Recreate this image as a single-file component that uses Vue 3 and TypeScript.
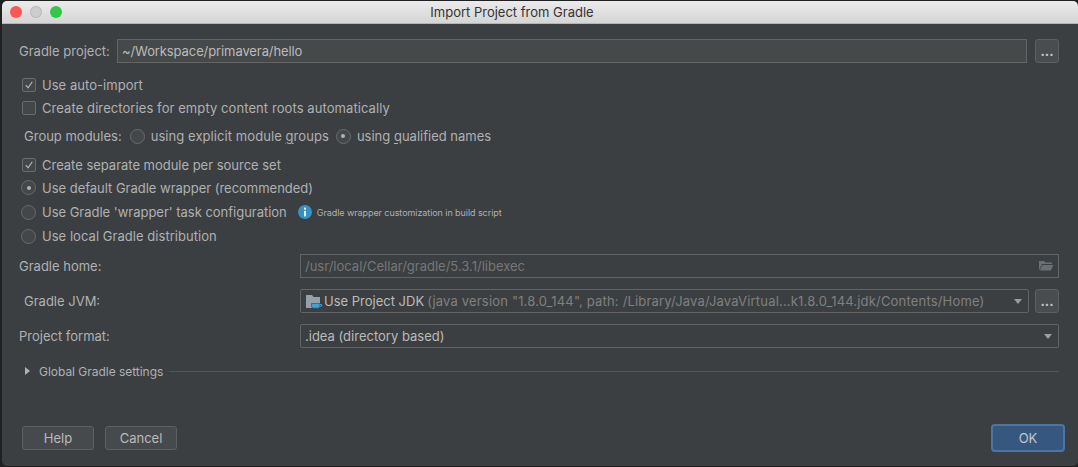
<script setup lang="ts">
const ellipsis = '...'
</script>

<template>
  <div class="screen">
    <div class="window">
      <header class="titlebar">
        <div class="lights">
          <span class="light red"></span>
          <span class="light gray"></span>
          <span class="light green"></span>
        </div>
        <div class="title">Import Project from Gradle</div>
      </header>
      <main class="content">
        <div class="project-row">
          <span class="label">Gradle project:</span>
          <div class="field project-field">~/Workspace/primavera/hello</div>
          <button class="dots">{{ ellipsis }}</button>
        </div>
        <div class="opt first"><span class="check on"><svg viewBox="0 0 14 14" width="14" height="14"><path d="M3.2 7.2 6 10.2 10.8 3.2" fill="none" stroke="#aeb0b2" stroke-width="1.5"/></svg></span>Use auto-import</div>
        <div class="opt wide"><span class="check"></span>Create directories for empty content roots automatically</div>
        <div class="group-row">
          <span class="group-label">Group modules:</span>
          <span class="radio"></span><span class="group-text">using explicit module <u>g</u>roups</span>
          <span class="radio on"></span><span>using <u>q</u>ualified names</span>
        </div>
        <div class="opt sep tight"><span class="check on"><svg viewBox="0 0 14 14" width="14" height="14"><path d="M3.2 7.2 6 10.2 10.8 3.2" fill="none" stroke="#aeb0b2" stroke-width="1.5"/></svg></span>Create separate module per source set</div>
        <div class="opt tight"><span class="radio on big"></span>Use default Gradle wrapper (recommended)</div>
        <div class="opt tall tight wrapper"><span class="radio big"></span>Use Gradle 'wrapper' task configuration
          <svg class="info" viewBox="0 0 14 14" width="14" height="14"><circle cx="7" cy="7" r="7" fill="#3592c4"/><rect x="6" y="2.6" width="2" height="2" fill="#e8edf0"/><rect x="6" y="5.8" width="2" height="5.6" fill="#e8edf0"/></svg>
          <span class="hint">Gradle wrapper customization in build script</span>
        </div>
        <div class="opt tall"><span class="radio big"></span>Use local Gradle distribution</div>
        <div class="form">
          <span class="label">Gradle home:</span>
          <div class="field disabled span2">/usr/local/Cellar/gradle/5.3.1/libexec
            <svg class="folder" viewBox="0 0 16 14" width="16" height="14"><path d="M1 3h5l1.5 1.6H14V6H4L1 12.5z" fill="#6b7074"/><path d="M4.4 7h11l-2.6 5.5H1.8z" fill="#6b7074"/></svg>
          </div>
          <span class="label indent">Gradle JVM:</span>
          <div class="jvm-cell">
            <div class="field combo">
              <svg class="jdk" viewBox="0 0 17 17" width="17" height="17"><path d="M1 2h6l1.5 2H15v8H9v3H1z" fill="#94a1ac"/><path d="M6.5 10.5h8.500v2.700a2 2 0 0 1-2 2h-4.500a2 2 0 0 1-2-2z" fill="#3ba1d8" stroke="#3c3f41" stroke-width="0.6"/><path d="M15 11.500h1.500v1.700H15" fill="none" stroke="#3ba1d8"/></svg>
              <span class="jdk-name">Use Project JDK</span>
              <span class="jdk-detail">(java version "1.8.0_144", path: /Library/Java/JavaVirtual...k1.8.0_144.jdk/Contents/Home)</span>
              <span class="caret"></span>
            </div>
            <button class="dots jvm-dots">{{ ellipsis }}</button>
          </div>
          <span class="label">Project format:</span>
          <div class="field combo span2">.idea (directory based)<span class="caret"></span></div>
        </div>
        <div class="global">
          <span class="tri"></span>
          <span class="global-text">Global Gradle settings</span>
          <span class="rule"></span>
        </div>
        <footer class="actions">
          <button class="btn">Help</button>
          <button class="btn">Cancel</button>
          <button class="btn ok">OK</button>
        </footer>
      </main>
    </div>
  </div>
</template>

<style>
html, body { margin: 0; background: #1f2022; }
</style>

<style scoped>
.screen {
  width: 1078px;
  height: 467px;
  background: #1f2022;
  padding: 1px 0 1px 2px;
  box-sizing: border-box;
  overflow: hidden;
  font: 13px Inter, "Liberation Sans", sans-serif;
  color: #afb1b3;
}
.window {
  height: 100%;
  border-radius: 5px;
  overflow: hidden;
  background: #3c3f41;
  display: flex;
  flex-direction: column;
}
.titlebar {
  flex: none;
  height: 22px;
  background: linear-gradient(#ebebeb, #d5d5d5);
  border-bottom: 1px solid #b5b5b5;
  display: flex;
  align-items: center;
  position: relative;
  color: #333;
}
.lights { display: flex; gap: 8px; padding-left: 8px; }
.light { width: 12px; height: 12px; border-radius: 50%; }
.red { background: #fc5753; }
.gray { background: #cdcdcd; box-shadow: inset 0 0 0 1px #bcbcbc; }
.green { background: #33c748; }
.title { position: absolute; inset: 0 56px 0 0; text-align: center; line-height: 22px; font-size: 13px; }
.content { flex: 1; display: flex; flex-direction: column; padding: 15px 19px 16px 17px; min-height: 0; }
.project-row { display: flex; align-items: center; height: 24px; }
.project-row .label { width: 98px; flex: none; }
.field {
  box-sizing: border-box;
  height: 24px;
  border: 1px solid #646464;
  background: #45494a;
  color: #bbbbbb;
  display: flex;
  align-items: center;
  padding: 0 4px;
  white-space: nowrap;
}
.project-field { flex: 1; letter-spacing: -0.1px; }
.dots {
  flex: none;
  width: 24px;
  height: 24px;
  margin-left: 8px;
  box-sizing: border-box;
  border: 1px solid #5e6060;
  border-radius: 3px;
  background: #4a4d4f;
  color: #c2c6cc;
  font: bold 13px Inter, sans-serif;
  padding: 0;
}
.jvm-dots { margin-left: 6px; }
.opt { display: flex; align-items: center; height: 23px; padding-left: 3px; white-space: nowrap; letter-spacing: 0.04px; }
.opt.wide { letter-spacing: 0.08px; }
.opt.tight { letter-spacing: -0.02px; }
.opt.tall { height: 24px; }
.opt.first { margin-top: 10px; }
.opt.sep { margin-top: 5px; }
.opt.wrapper { margin-top: 1px; }
.check {
  box-sizing: border-box;
  width: 14px;
  height: 14px;
  flex: none;
  border: 1px solid #6b6b6b;
  border-radius: 2px;
  background: #43474a;
  margin-right: 6px;
  display: flex;
  align-items: center;
  justify-content: center;
}
.radio {
  box-sizing: border-box;
  width: 15px;
  height: 15px;
  flex: none;
  border-radius: 50%;
  border: 1px solid #6b6b6b;
  background: #43474a;
  position: relative;
  margin-right: 6px;
}
.radio.big { margin-left: -1px; }
.radio.on::after {
  content: "";
  position: absolute;
  left: 4.5px;
  top: 4.5px;
  width: 4px;
  height: 4px;
  border-radius: 50%;
  background: #b0b2b4;
}
.group-row { display: flex; align-items: center; height: 24px; margin-top: 5px; padding-left: 5px; white-space: nowrap; }
.group-label { margin-right: 8px; }
.group-text { margin-right: 7px; letter-spacing: 0.07px; }
u { text-underline-offset: 2px; }
.info { margin: 0 5px 0 11px; flex: none; }
.hint { font-size: 9px; letter-spacing: -0.07px; }
.form {
  display: grid;
  grid-template-columns: 281px 1fr;
  row-gap: 11px;
  align-items: center;
  margin-top: 6px;
}
.indent { padding-left: 5px; }
.span2 { position: relative; }
.disabled { background: transparent; color: #777; }
.folder { position: absolute; right: 4px; top: 3px; }
.jvm-cell { display: flex; align-items: center; }
.combo { flex: 1; border-radius: 2px; background: transparent; position: relative; color: #bbb; padding-right: 26px; }
.jdk { margin-right: 2px; flex: none; }
.jdk-name { margin-right: 3px; }
.jdk-detail { color: #808080; overflow: hidden; letter-spacing: 0.18px; }
.caret {
  position: absolute;
  right: 6px;
  top: 9px;
  width: 0;
  height: 0;
  border-left: 4.5px solid transparent;
  border-right: 4.5px solid transparent;
  border-top: 5px solid #9a9c9e;
}
.global { display: flex; align-items: center; height: 24px; margin-top: 11px; padding-left: 6px; font-size: 12px; }
.tri {
  width: 0;
  height: 0;
  border-top: 4px solid transparent;
  border-bottom: 4px solid transparent;
  border-left: 5px solid #afb1b3;
  margin-right: 9px;
}
.global-text { letter-spacing: -0.03px; }
.rule { flex: 1; height: 1px; background: #555; margin-left: 6px; }
.actions { display: flex; gap: 11px; margin-top: auto; padding-left: 3px; }
.btn {
  box-sizing: border-box;
  width: 72px;
  height: 24px;
  border: 1px solid #5e6060;
  border-radius: 3px;
  background: #474a4c;
  color: #bbb;
  font: 13px Inter, sans-serif;
  padding: 0;
}
.btn.ok {
  margin-left: auto;
  margin-right: -6px;
  background: #365880;
  border: 2px solid #4b76a4;
  border-radius: 4px;
  color: #c4c7ca;
  height: 28px;
  width: 74px;
  margin-top: -2px;
  margin-bottom: -2px;
}
</style>
